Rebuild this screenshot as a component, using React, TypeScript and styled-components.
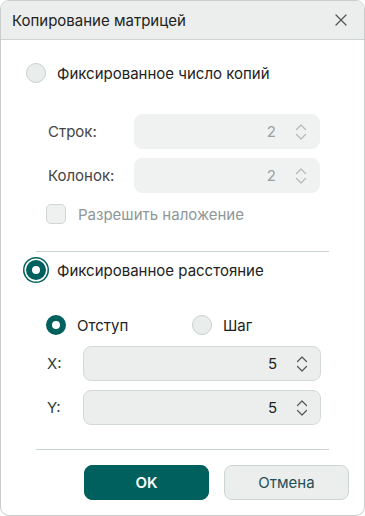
import styled, { createGlobalStyle } from 'styled-components';

const GlobalStyle = createGlobalStyle`
  html, body {
    margin: 0;
    padding: 0;
    background: #ffffff;
  }
  body {
    font-family: Inter, "Noto Sans", "Liberation Sans", sans-serif;
    color: #222;
  }
`;

const Dialog = styled.div`
  box-sizing: border-box;
  width: 365px;
  height: 516px;
  border: 1px solid #c9cdcc;
  border-radius: 9px;
  overflow: hidden;
  background: #ffffff;
  display: flex;
  flex-direction: column;
`;

const Header = styled.div`
  height: 39px;
  flex-shrink: 0;
  box-sizing: border-box;
  padding: 0 14px 0 11px;
  background: #ebeeed;
  border-bottom: 1px solid #cfd4d3;
  display: flex;
  align-items: center;
  justify-content: space-between;
`;

const Title = styled.span`
  font-size: 15px;
  color: #222;
`;

const CloseButton = styled.button`
  width: 18px;
  height: 18px;
  padding: 0;
  border: none;
  background: none;
  display: flex;
  align-items: center;
  justify-content: center;
  cursor: pointer;
`;

const Body = styled.div`
  padding: 23px 0 0 25px;
  display: flex;
  flex-direction: column;
`;

interface RowProps { top: number }
const RadioRow = styled.label<RowProps>`
  display: flex;
  align-items: center;
  height: 20px;
  margin-top: ${(p) => p.top}px;
  gap: 11px;
  font-size: 15px;
  color: #222;
`;

interface RadioProps { checked?: boolean; focused?: boolean }
const Radio = styled.span<RadioProps>`
  box-sizing: border-box;
  width: 20px;
  height: 20px;
  border-radius: 50%;
  flex-shrink: 0;
  background: ${(p) => (p.checked ? '#ffffff' : '#e9edeb')};
  border: ${(p) => (p.checked ? '6px solid #00605e' : '1px solid #c7d0ce')};
  box-shadow: ${(p) => (p.focused ? '0 0 0 1.5px #ffffff, 0 0 0 3px #00605e' : 'none')};
`;

const Fields = styled.div<{ indent: number; top: number }>`
  margin-top: ${(p) => p.top}px;
  padding-left: ${(p) => p.indent}px;
  display: flex;
  flex-direction: column;
  gap: 9px;
`;

const FieldRow = styled.div`
  display: flex;
  align-items: center;
`;

const FieldLabel = styled.span<{ width: number; disabled?: boolean }>`
  width: ${(p) => p.width}px;
  flex-shrink: 0;
  font-size: 15px;
  color: ${(p) => (p.disabled ? '#444' : '#2f3f44')};
`;

const SpinBox = styled.div<{ width: number; disabled?: boolean }>`
  box-sizing: border-box;
  width: ${(p) => p.width}px;
  height: 35px;
  border-radius: 8px;
  background: ${(p) => (p.disabled ? '#f0f2f1' : '#ebeeed')};
  border: 1px solid ${(p) => (p.disabled ? '#f0f2f1' : '#d3d9d8')};
  display: flex;
  align-items: center;
  justify-content: flex-end;
  padding-right: 12px;
  gap: 19px;
`;

const SpinValue = styled.span<{ disabled?: boolean }>`
  font-size: 15px;
  color: ${(p) => (p.disabled ? '#9a9fa0' : '#222')};
`;

const Checkbox = styled.span`
  box-sizing: border-box;
  width: 20px;
  height: 20px;
  border-radius: 5px;
  background: #eef1f0;
  border: 1px solid #cfd6d4;
`;

const CheckRow = styled.label`
  margin-top: 11px;
  margin-left: 20px;
  display: flex;
  align-items: center;
  gap: 12px;
  font-size: 15px;
  color: #8e9698;
`;

const Divider = styled.div<{ top: number }>`
  margin-top: ${(p) => p.top}px;
  margin-left: 10px;
  width: 293px;
  height: 1px;
  background: #c8d2d0;
`;

const OptionRow = styled.div`
  margin-top: 35px;
  padding-left: 20px;
  display: flex;
`;

const Option = styled.div`
  width: 146px;
`;

const Footer = styled.div`
  margin-top: 15px;
  padding-left: 58px;
  display: flex;
  gap: 15px;
`;

interface ButtonProps { primary?: boolean }
const Button = styled.button<ButtonProps>`
  box-sizing: border-box;
  width: 125px;
  height: 35px;
  border-radius: 8px;
  font-family: inherit;
  font-size: 15px;
  font-weight: ${(p) => (p.primary ? 600 : 400)};
  color: ${(p) => (p.primary ? '#ffffff' : '#1f4e54')};
  background: ${(p) => (p.primary ? '#00605e' : '#ebeeed')};
  border: 1px solid ${(p) => (p.primary ? '#00605e' : '#cbd5d3')};
  cursor: pointer;
`;

function Chevrons({ color }: { color: string }) {
  return (
    <svg width="12" height="18" viewBox="0 0 12 18" fill="none">
      <path d="M1.5 6.5 L6 2 L10.5 6.5" stroke={color} strokeWidth="1.2" strokeLinecap="round" strokeLinejoin="round" />
      <path d="M1.5 11.5 L6 16 L10.5 11.5" stroke={color} strokeWidth="1.2" strokeLinecap="round" strokeLinejoin="round" />
    </svg>
  );
}

function Spin({ value, width, disabled }: { value: string; width: number; disabled?: boolean }) {
  return (
    <SpinBox width={width} disabled={disabled}>
      <SpinValue disabled={disabled}>{value}</SpinValue>
      <Chevrons color={disabled ? '#b3b9b9' : '#555'} />
    </SpinBox>
  );
}

export default function App() {
  return (
    <>
      <GlobalStyle />
      <Dialog>
        <Header>
          <Title>Копирование матрицей</Title>
          <CloseButton aria-label="close">
            <svg width="12" height="12" viewBox="0 0 12 12">
              <path d="M1 1 L11 11 M11 1 L1 11" stroke="#555" strokeWidth="1.3" strokeLinecap="round" />
            </svg>
          </CloseButton>
        </Header>
        <Body>
          <RadioRow top={0}>
            <Radio />
            Фиксированное число копий
          </RadioRow>

          <Fields indent={22} top={31}>
            <FieldRow>
              <FieldLabel width={86} disabled>Строк:</FieldLabel>
              <Spin value="2" width={186} disabled />
            </FieldRow>
            <FieldRow>
              <FieldLabel width={86} disabled>Колонок:</FieldLabel>
              <Spin value="2" width={186} disabled />
            </FieldRow>
          </Fields>

          <CheckRow>
            <Checkbox />
            Разрешить наложение
          </CheckRow>

          <Divider top={27} />

          <RadioRow top={8}>
            <Radio checked focused />
            Фиксированное расстояние
          </RadioRow>

          <OptionRow>
            <Option>
              <RadioRow top={0}>
                <Radio checked />
                Отступ
              </RadioRow>
            </Option>
            <Option>
              <RadioRow top={0}>
                <Radio />
                Шаг
              </RadioRow>
            </Option>
          </OptionRow>

          <Fields indent={21} top={11}>
            <FieldRow>
              <FieldLabel width={36}>X:</FieldLabel>
              <Spin value="5" width={238} />
            </FieldRow>
            <FieldRow>
              <FieldLabel width={36}>Y:</FieldLabel>
              <Spin value="5" width={238} />
            </FieldRow>
          </Fields>

          <Divider top={24} />

          <Footer>
            <Button primary>OK</Button>
            <Button>Отмена</Button>
          </Footer>
        </Body>
      </Dialog>
    </>
  );
}
